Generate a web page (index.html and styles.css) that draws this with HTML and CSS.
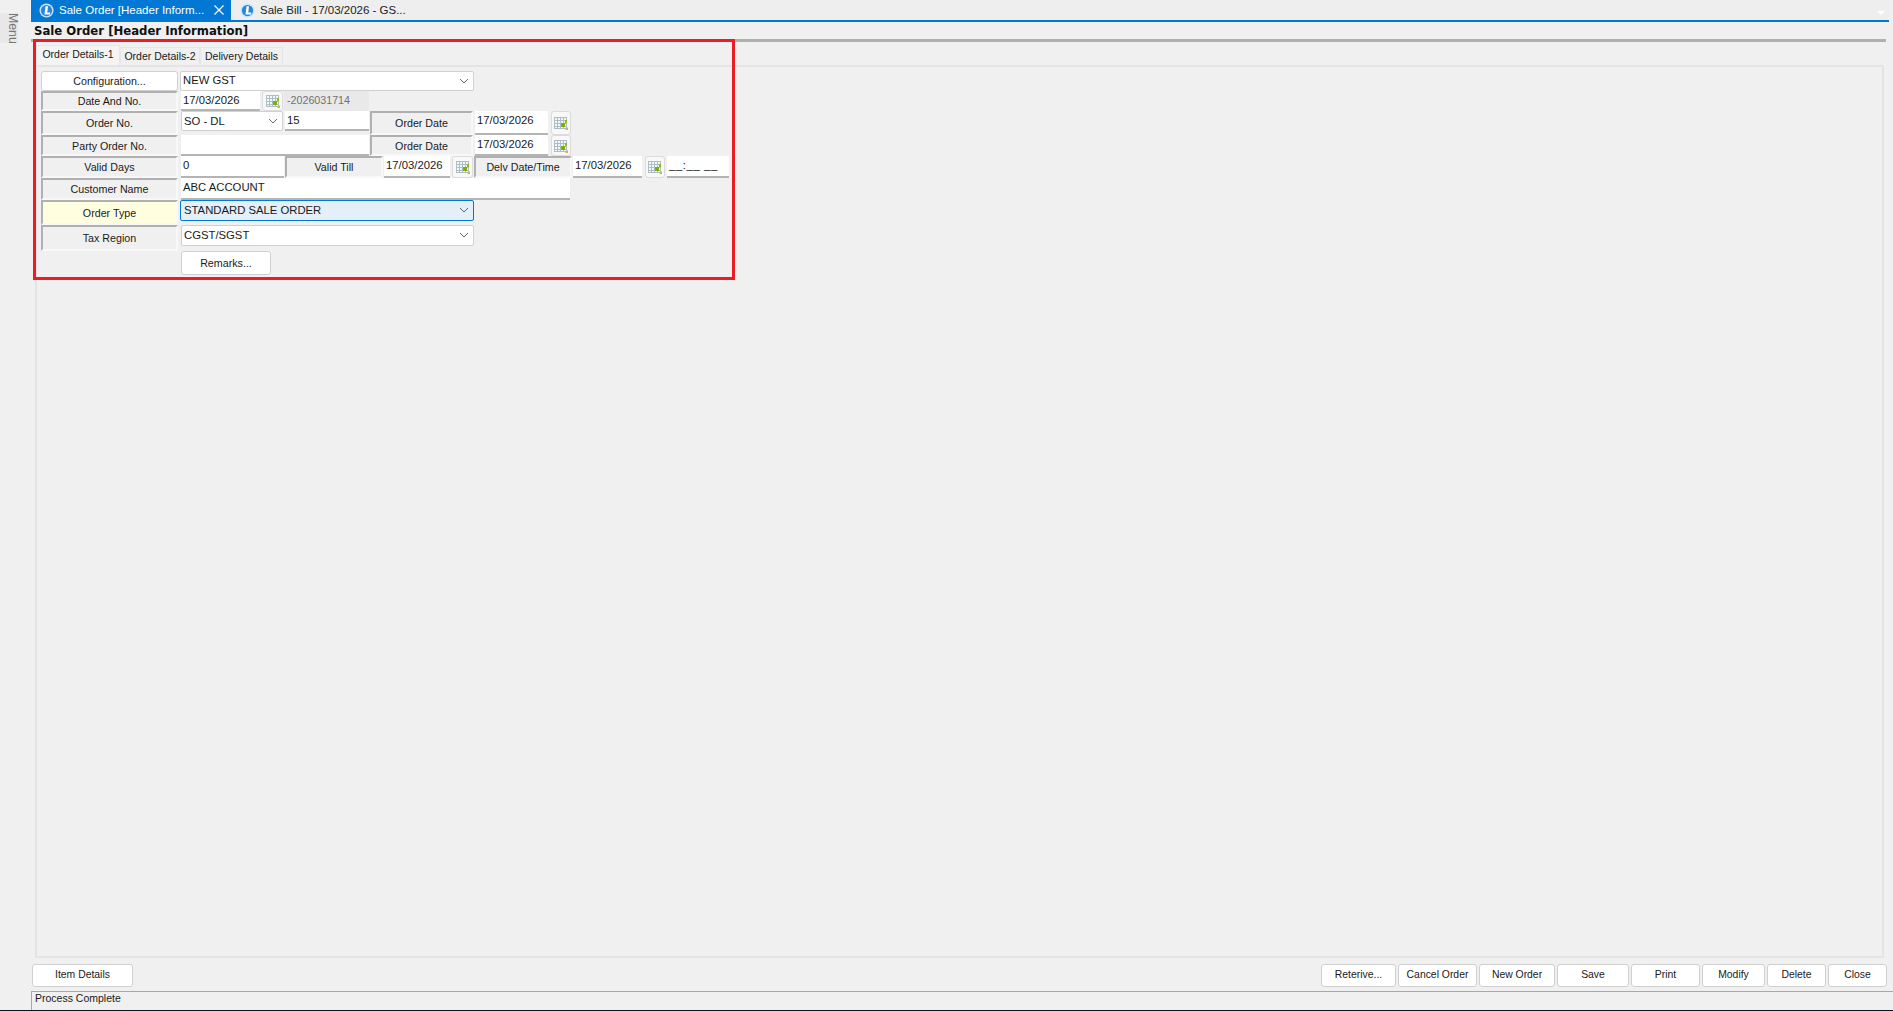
FILE: index.html
```html
<!DOCTYPE html>
<html lang="en">
<head>
<meta charset="utf-8">
<title>Sale Order</title>
<link rel="stylesheet" href="styles.css">
</head>
<body>
<svg class="defs" width="0" height="0" aria-hidden="true">
  <defs>
    <symbol id="chev" viewBox="0 0 10 6"><path d="M1 1l4 4 4-4" fill="none" stroke="#666" stroke-width="1"/></symbol>
    <symbol id="cal" viewBox="0 0 16 16">
      <path d="M1.500 2.500h12v11h-12z" fill="#f4f7f8"/>
      <path d="M1.500 2.500h12M1.500 5.500h12M1.500 8.500h12M1.500 11.500h12M1.500 13.500h12M1.500 2v12M4.500 2v12M7.500 2v12M10.500 2v12M13.500 2v12" fill="none" stroke="#adbfc6" stroke-width="1"/>
      <path d="M8 8h4v4H8z" fill="#7fb000"/>
      <path d="M12 5h2v3h-2z" fill="#8cbf10"/>
      <path d="M12 15l3-3v3z" fill="#f2a33c"/>
    </symbol>
    <symbol id="logo" viewBox="0 0 16 16">
      <circle cx="8" cy="8" r="7.500" fill="#cfe6f8"/>
      <circle cx="8" cy="8" r="6" fill="#2a86d8"/>
      <path d="M7 3.500h2.600l-.8 6.500h3.200l-.3 2.200H5.800z" fill="#fff"/>
    </symbol>
  </defs>
</svg>
<div class="app">
  <aside class="side"><span class="side-text">Menu</span></aside>
  <div class="col">
    <header class="tabbar">
      <div class="doc-tab doc-tab-active">
        <svg class="logo"><use href="#logo"/></svg>
        <span class="doc-name">Sale Order [Header Inform...</span>
        <svg class="close" viewBox="0 0 10 10"><path d="M.5.500l9 9M9.500.500l-9 9" stroke="#fff" stroke-width="1.200" fill="none"/></svg>
      </div>
      <div class="doc-tab">
        <svg class="logo"><use href="#logo"/></svg>
        <span class="doc-name">Sale Bill - 17/03/2026 - GS...</span>
      </div>
      <span class="tab-menu"></span>
    </header>
    <section class="content">
      <h1 class="title">Sale Order [Header Information]</h1>
      <div class="rule"></div>
      <nav class="strip">
        <span class="tab tab-on">Order Details-1</span>
        <span class="tab tab-2">Order Details-2</span>
        <span class="tab tab-3">Delivery Details</span>
      </nav>
      <div class="panel">
        <div class="row r20">
          <div class="btn w-label">Configuration...</div>
          <div class="combo combo-top w-wide ml2">NEW GST<svg class="chev"><use href="#chev"/></svg></div>
        </div>
        <div class="row r20">
          <div class="label w-label">Date And No.</div>
          <div class="input w79 ml3">17/03/2026</div>
          <div class="cal w21 ml2"><svg class="cal-i"><use href="#cal"/></svg></div>
          <div class="ro w85 ml1">-2026031714</div>
        </div>
        <div class="row r24">
          <div class="label w-label">Order No.</div>
          <div class="combo w102 ml3 h20">SO - DL<svg class="chev"><use href="#chev"/></svg></div>
          <div class="input w84 ml2 h20">15</div>
          <div class="label w103 ml1">Order Date</div>
          <div class="input w73 ml2">17/03/2026</div>
          <div class="cal w20 ml3"><svg class="cal-i"><use href="#cal"/></svg></div>
        </div>
        <div class="row r21">
          <div class="label w-label">Party Order No.</div>
          <div class="input w188 ml3"></div>
          <div class="label w103 ml1">Order Date</div>
          <div class="input w73 ml2">17/03/2026</div>
          <div class="cal w20 ml3"><svg class="cal-i"><use href="#cal"/></svg></div>
        </div>
        <div class="row r22">
          <div class="label w-label">Valid Days</div>
          <div class="input w103 ml3">0</div>
          <div class="label w98 ml1">Valid Till</div>
          <div class="input w66 ml1">17/03/2026</div>
          <div class="cal w21 ml2"><svg class="cal-i"><use href="#cal"/></svg></div>
          <div class="label w98 ml1">Delv Date/Time</div>
          <div class="input w69 ml1">17/03/2026</div>
          <div class="cal w20 ml3"><svg class="cal-i"><use href="#cal"/></svg></div>
          <div class="input w62 ml2"><span class="time">__:__ __</span></div>
        </div>
        <div class="row r22">
          <div class="label w-label">Customer Name</div>
          <div class="input w389 ml3">ABC ACCOUNT</div>
        </div>
        <div class="row r25">
          <div class="label label-hl w-label">Order Type</div>
          <div class="combo combo-focus w-wide ml2 h21">STANDARD SALE ORDER<svg class="chev"><use href="#chev"/></svg></div>
        </div>
        <div class="row r26">
          <div class="label w-label">Tax Region</div>
          <div class="combo w293 ml3 h21">CGST/SGST<svg class="chev"><use href="#chev"/></svg></div>
        </div>
        <div class="row r24">
          <div class="btn w90 offset">Remarks...</div>
        </div>
      </div>
      <footer class="actions">
        <div class="btn w100">Item Details</div>
        <div class="actions-right">
          <div class="btn w75">Reterive...</div>
          <div class="btn w79b">Cancel Order</div>
          <div class="btn w76">New Order</div>
          <div class="btn w72">Save</div>
          <div class="btn w69b">Print</div>
          <div class="btn w63">Modify</div>
          <div class="btn w59">Delete</div>
          <div class="btn w58">Close</div>
        </div>
      </footer>
      <div class="status">Process Complete</div>
    </section>
  </div>
  <div class="highlight"></div>
</div>
</body>
</html>
```

FILE: styles.css
```css
* { box-sizing: border-box; }
html, body { margin: 0; padding: 0; }
body { background: #f0f0f0; color: #1a1a1a; font: 10.700px/1 "Liberation Sans", Arial, sans-serif; overflow: hidden; }
.defs { position: absolute; }
.app { position: relative; width: 1893px; height: 1011px; display: flex; border-bottom: 1px solid #10101c; }
.col { flex: 1; min-width: 0; display: flex; flex-direction: column; }

.tabbar { height: 22px; margin-right: 4px; display: flex; border-bottom: 2px solid #0078d4; background: #eeeeee; position: relative; flex: none; }
.doc-tab { height: 20px; width: 200px; display: flex; align-items: center; padding-left: 8px; font-size: 11.500px; color: #222; }
.doc-tab + .doc-tab { padding-left: 9px; }
.doc-tab-active { background: #0078d4; color: #fff; }
.doc-name { margin-left: 5px; padding-top: 2px; white-space: nowrap; }
.logo { width: 15px; height: 15px; flex: none; }
.close { width: 10px; height: 10px; margin-left: 10px; flex: none; }
.tab-menu { position: absolute; right: 4px; top: 11px; width: 0; height: 0; border: 4px solid transparent; border-top: 4px solid #fff; border-bottom: 0; }

.side { width: 31px; flex: none; }
.side-text { display: block; width: 18px; height: 30px; margin-top: 13px; padding-left: 8px; background: #e8e8e8; writing-mode: vertical-rl; line-height: 10px; font-size: 12.300px; color: #777; }
.content { flex: 1; min-width: 0; display: flex; flex-direction: column; }

.title { margin: 0; height: 17px; padding: 3px 0 0 3px; font: bold 11.700px/12px "DejaVu Sans", sans-serif; color: #111; }
.rule { height: 3px; margin-right: 7px; background: #b0b0b0; flex: none; }
.strip { height: 23px; padding-left: 5px; display: flex; align-items: flex-end; flex: none; font-size: 10.500px; }
.tab { height: 18px; display: flex; align-items: center; justify-content: center; background: #f0f0f0; border: 1px solid #e6e6e6; border-bottom: 0; }
.tab-on { width: 84px; height: 20px; padding-bottom: 2px; background: #f4f4f4; }
.tab-2 { width: 80px; }
.tab-3 { width: 83px; }

.panel { height: 893px; margin: 0 9px 0 4px; padding: 4px 0 0 4px; border: 2px solid #e4e4e4; flex: none; }
.row { display: flex; align-items: flex-start; }
.r20 { height: 20px; }
.r21 { height: 21px; }
.r22 { height: 22px; }
.r24 { height: 24px; }
.r25 { height: 25px; }
.r26 { height: 26px; }
.row > * { height: 100%; flex: none; }
.row > .h20 { height: 20px; }
.row > .h21 { height: 21px; }

.label { display: flex; align-items: center; justify-content: center; padding-top: 1px; background: #f0f0f0; border: 2px solid #f8f8f8; border-top-color: #b0b0b0; border-left-color: #b0b0b0; white-space: nowrap; }
.label-hl { background: #ffffe0; }
.input { padding: 4px 0 0 2px; background: #fff; border-bottom: 2px solid #b4b4b4; white-space: nowrap; font-size: 11.300px; }
.ro { display: flex; align-items: center; padding: 0 0 2px 3px; background: #e9e9e9; color: #707070; }
.combo { position: relative; padding: 4px 0 0 2px; background: #fff; border: 1px solid #d0d0d0; border-radius: 2px; white-space: nowrap; font-size: 11.300px; }
.combo-top { padding-top: 3px; }
.combo-focus { padding-left: 3px; background: #e3f0fa; border: 1px solid #0078d4; }
.chev { position: absolute; right: 4px; top: 6px; width: 10px; height: 6px; }
.cal { display: flex; align-items: center; justify-content: center; background: #f8f8f8; border: 1px solid #dcdcdc; border-radius: 3px; }
.cal-i { width: 16px; height: 16px; }
.time { color: #111; letter-spacing: .6px; }
.btn { display: flex; align-items: center; justify-content: center; background: #fff; border: 1px solid #d0d0d0; border-radius: 3px; white-space: nowrap; }

.w-label { width: 137px; }
.w-wide { width: 294px; }
.w293 { width: 293px; }
.w79 { width: 79px; }
.w21 { width: 21px; }
.w85 { width: 85px; }
.w102 { width: 102px; }
.w84 { width: 84px; }
.w103 { width: 103px; }
.w73 { width: 73px; }
.w20 { width: 20px; }
.w188 { width: 188px; }
.w98 { width: 98px; }
.w66 { width: 66px; }
.w69 { width: 69px; }
.w62 { width: 62px; }
.w389 { width: 389px; }
.w90 { width: 90px; }
.ml1 { margin-left: 1px; }
.ml2 { margin-left: 2px; }
.ml3 { margin-left: 3px; }
.offset { margin-left: 140px; }

.actions { height: 23px; margin: 6px 6px 0 1px; display: flex; justify-content: space-between; flex: none; font-size: 10.400px; }
.actions .btn { height: 100%; }
.actions-right { display: flex; gap: 2px; }
.w100 { width: 101px; }
.w75 { width: 75px; }
.w79b { width: 79px; }
.w76 { width: 76px; }
.w72 { width: 72px; }
.w69b { width: 69px; }
.w63 { width: 63px; }
.w59 { width: 59px; }
.w58 { width: 59px; }

.status { flex: 1; margin-top: 4px; padding: 1px 0 0 3px; border-top: 1px solid #a8a8a8; border-left: 1px solid #a8a8a8; font-size: 10.500px; }

.highlight { position: absolute; left: 33px; top: 39px; width: 702px; height: 241px; border: 3px solid #ed1c24; pointer-events: none; }
```
